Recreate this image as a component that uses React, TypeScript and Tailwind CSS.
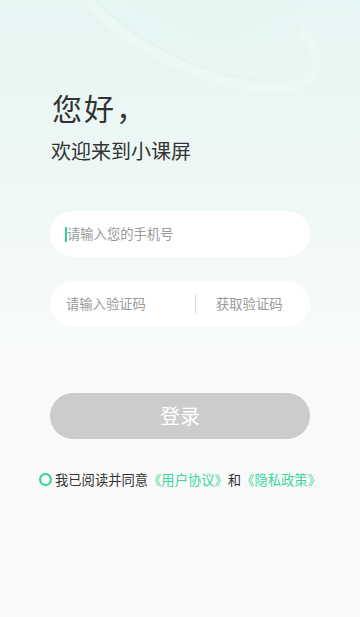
import React from "react";

export default function App() {
  return (
    <div
      className="relative w-[360px] h-[617px] overflow-hidden bg-[linear-gradient(180deg,#e6f6f3_0%,#eef8f6_30%,#f6faf9_50%,#fafafa_68%,#fafafa_100%)]"
      style={{ fontFamily: '"Noto Sans CJK SC", "Noto Sans", sans-serif' }}
    >
      <svg className="absolute left-0 top-0" width="360" height="200" viewBox="0 0 360 200">
        <defs>
          <radialGradient id="pl" cx="0.5" cy="0.4" r="0.6">
            <stop offset="0%" stopColor="#ddf4ee" stopOpacity="0.7" />
            <stop offset="100%" stopColor="#e8f7f3" stopOpacity="0" />
          </radialGradient>
        </defs>
        <circle cx="215" cy="0" r="95" fill="url(#pl)" />
        <path d="M88 0 C 120 40, 200 85, 270 88 C 320 90, 330 60, 300 30" fill="none" stroke="#f2fbf7" strokeWidth="9" strokeOpacity="0.45" />
        <path d="M95 0 C 130 35, 200 78, 265 80" fill="none" stroke="#dcf3ec" strokeWidth="2" strokeOpacity="0.4" />
      </svg>

      <div className="relative flex flex-col px-[50px] pt-[87px]">
        <div className="pl-[2px] text-[30px] leading-[40px] text-[#333] tracking-[2px]">您好，</div>
        <div className="pl-[1px] mt-[10px] text-[20px] leading-[28px] text-[#333]">欢迎来到小课屏</div>

        <div className="mt-[46px] h-[46px] rounded-full bg-white flex items-center pl-[15px] pr-4">
          <span className="w-[2px] h-[15px] bg-[#2bd19a]" />
          <span className="text-[13.3px] text-[#9a9a9a]">请输入您的手机号</span>
        </div>

        <div className="mt-[24px] h-[46px] rounded-full bg-white flex items-center pl-[16px]">
          <span className="flex-1 text-[13.3px] text-[#9a9a9a]">请输入验证码</span>
          <span className="w-px h-[20px] bg-[#dcdcdc]" />
          <span className="w-[114px] pl-[20px] text-[13.3px] text-[#9a9a9a]">获取验证码</span>
        </div>

        <div className="mt-[66px] h-[46px] rounded-full bg-[#cccccc] flex items-center justify-center text-white text-[20px]">
          登录
        </div>
      </div>

      <div className="relative mt-[31px] flex items-center pl-[39px] text-[13.3px] text-[#333]">
        <span className="w-[13px] h-[13px] rounded-full border-2 border-[#2ed39c] mr-[3px]" />
        <span>我已阅读并同意</span>
        <span className="text-[#3ad6a2]">《用户协议》</span>
        <span>和</span>
        <span className="text-[#3ad6a2]">《隐私政策》</span>
      </div>
    </div>
  );
}
